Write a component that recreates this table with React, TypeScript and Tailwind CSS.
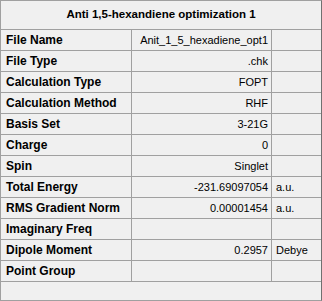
const rows: [string, string, string][] = [
  ["File Name", "Anit_1_5_hexadiene_opt1", ""],
  ["File Type", ".chk", ""],
  ["Calculation Type", "FOPT", ""],
  ["Calculation Method", "RHF", ""],
  ["Basis Set", "3-21G", ""],
  ["Charge", "0", ""],
  ["Spin", "Singlet", ""],
  ["Total Energy", "-231.69097054", "a.u."],
  ["RMS Gradient Norm", "0.00001454", "a.u."],
  ["Imaginary Freq", "", ""],
  ["Dipole Moment", "0.2957", "Debye"],
  ["Point Group", "", ""],
];

export default function App() {
  return (
    <div
      className="w-[322px] h-[301px] bg-[#f0f0f0] border border-[#a0a0a0] border-r-[#707070] text-black flex flex-col"
      style={{ fontFamily: '"Liberation Sans", Arial, sans-serif' }}
    >
      <div className="h-[29px] shrink-0 border-b border-[#a0a0a0] flex items-center justify-center text-[11.5px] font-bold">
        Anti 1,5-hexandiene optimization 1
      </div>
      <div className="grid grid-cols-[131px_140px_1fr]">
        {rows.map(([label, value, unit]) => (
          <div key={label} className="contents">
            <div className="h-[21px] border-b border-r border-[#a0a0a0] flex items-center pl-[5px] text-[12px] font-bold">
              {label}
            </div>
            <div className="h-[21px] border-b border-r border-[#a0a0a0] flex items-center justify-end pr-[3px] text-[11px]">
              {value}
            </div>
            <div className="h-[21px] border-b border-[#a0a0a0] flex items-center pl-[4px] text-[11px]">
              {unit}
            </div>
          </div>
        ))}
      </div>
    </div>
  );
}
